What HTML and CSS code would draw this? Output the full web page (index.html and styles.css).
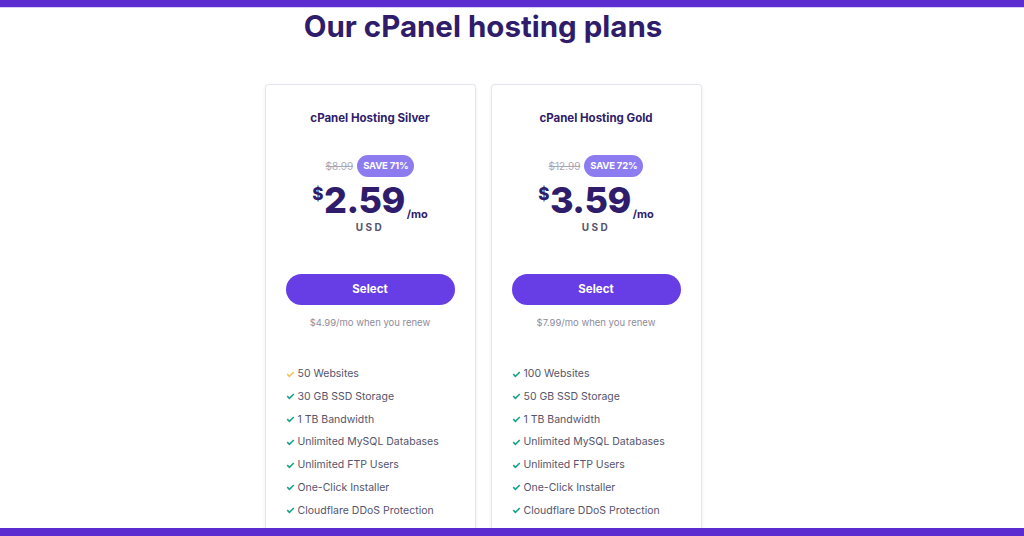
FILE: index.html
```html
<!DOCTYPE html>
<html>
    <head>
        <title>cPanel hosting plans</title>
        <link rel="stylesheet" href="styles.css">
    </head>
    <body>
        <div class="topBar"></div>

        <div class="page">
            <h1 class="mainTitle">Our cPanel hosting plans</h1>

            <div class="plans">
                <div class="card">
                    <div class="planName">cPanel Hosting Silver</div>
                    <div class="oldRow">
                        <span class="oldPrice">$8.99</span>
                        <span class="badge">SAVE 71%</span>
                    </div>
                    <div class="price"><span class="currency">$</span>2.59<span class="period">/mo</span></div>
                    <div class="usd">USD</div>
                    <div class="button">Select</div>
                    <div class="renew">$4.99/mo when you renew</div>
                    <ul class="features">
                        <li><svg class="check gold" viewBox="0 0 10 8"><path d="M0.6 4.2 L1.9 2.9 L3.8 4.8 L8.1 0.5 L9.4 1.8 L3.8 7.4 Z"/></svg>50 Websites</li>
                        <li><svg class="check" viewBox="0 0 10 8"><path d="M0.6 4.2 L1.9 2.9 L3.8 4.8 L8.1 0.5 L9.4 1.8 L3.8 7.4 Z"/></svg>30 GB SSD Storage</li>
                        <li><svg class="check" viewBox="0 0 10 8"><path d="M0.6 4.2 L1.9 2.9 L3.8 4.8 L8.1 0.5 L9.4 1.8 L3.8 7.4 Z"/></svg>1 TB Bandwidth</li>
                        <li><svg class="check" viewBox="0 0 10 8"><path d="M0.6 4.2 L1.9 2.9 L3.8 4.8 L8.1 0.5 L9.4 1.8 L3.8 7.4 Z"/></svg>Unlimited MySQL Databases</li>
                        <li><svg class="check" viewBox="0 0 10 8"><path d="M0.6 4.2 L1.9 2.9 L3.8 4.8 L8.1 0.5 L9.4 1.8 L3.8 7.4 Z"/></svg>Unlimited FTP Users</li>
                        <li><svg class="check" viewBox="0 0 10 8"><path d="M0.6 4.2 L1.9 2.9 L3.8 4.8 L8.1 0.5 L9.4 1.8 L3.8 7.4 Z"/></svg>One-Click Installer</li>
                        <li><svg class="check" viewBox="0 0 10 8"><path d="M0.6 4.2 L1.9 2.9 L3.8 4.8 L8.1 0.5 L9.4 1.8 L3.8 7.4 Z"/></svg>Cloudflare DDoS Protection</li>
                    </ul>
                </div>

                <div class="card">
                    <div class="planName">cPanel Hosting Gold</div>
                    <div class="oldRow">
                        <span class="oldPrice">$12.99</span>
                        <span class="badge">SAVE 72%</span>
                    </div>
                    <div class="price"><span class="currency">$</span>3.59<span class="period">/mo</span></div>
                    <div class="usd">USD</div>
                    <div class="button">Select</div>
                    <div class="renew">$7.99/mo when you renew</div>
                    <ul class="features">
                        <li><svg class="check" viewBox="0 0 10 8"><path d="M0.6 4.2 L1.9 2.9 L3.8 4.8 L8.1 0.5 L9.4 1.8 L3.8 7.4 Z"/></svg>100 Websites</li>
                        <li><svg class="check" viewBox="0 0 10 8"><path d="M0.6 4.2 L1.9 2.9 L3.8 4.8 L8.1 0.5 L9.4 1.8 L3.8 7.4 Z"/></svg>50 GB SSD Storage</li>
                        <li><svg class="check" viewBox="0 0 10 8"><path d="M0.6 4.2 L1.9 2.9 L3.8 4.8 L8.1 0.5 L9.4 1.8 L3.8 7.4 Z"/></svg>1 TB Bandwidth</li>
                        <li><svg class="check" viewBox="0 0 10 8"><path d="M0.6 4.2 L1.9 2.9 L3.8 4.8 L8.1 0.5 L9.4 1.8 L3.8 7.4 Z"/></svg>Unlimited MySQL Databases</li>
                        <li><svg class="check" viewBox="0 0 10 8"><path d="M0.6 4.2 L1.9 2.9 L3.8 4.8 L8.1 0.5 L9.4 1.8 L3.8 7.4 Z"/></svg>Unlimited FTP Users</li>
                        <li><svg class="check" viewBox="0 0 10 8"><path d="M0.6 4.2 L1.9 2.9 L3.8 4.8 L8.1 0.5 L9.4 1.8 L3.8 7.4 Z"/></svg>One-Click Installer</li>
                        <li><svg class="check" viewBox="0 0 10 8"><path d="M0.6 4.2 L1.9 2.9 L3.8 4.8 L8.1 0.5 L9.4 1.8 L3.8 7.4 Z"/></svg>Cloudflare DDoS Protection</li>
                    </ul>
                </div>
            </div>
        </div>

        <div class="bottomBar"></div>
    </body>
</html>
```

FILE: styles.css
```css
body {
    margin: 0px;
    font-family: "Inter", "DejaVu Sans", sans-serif;
    background-color: white;
    color: #2f1c6a;
    overflow: hidden;
    height: 536px;
}
.topBar {
    height: 7px;
    background-color: #5b2dd0;
    border-bottom: 1px solid #d9cdf7;
}
.bottomBar {
    position: fixed;
    left: 0;
    right: 0;
    bottom: 0;
    height: 8px;
    background-color: #5b2dd0;
}
.page {
    display: flex;
    flex-direction: column;
    align-items: center;
    padding-right: 58px;
}
.mainTitle {
    margin: 1px 0 0 0;
    font-size: 29.5px;
    font-weight: 700;
    color: #2f1c6a;
    line-height: 34px;
}
.plans {
    display: flex;
    gap: 15px;
    margin-top: 41px;
}
.card {
    width: 209px;
    border: 1px solid #e6e5ec;
    border-bottom: none;
    border-radius: 4px 4px 0 0;
    box-shadow: 0 1px 4px rgba(30, 20, 80, 0.06);
    padding-top: 25px;
    text-align: center;
    height: 426px;
}
.planName {
    font-size: 11.5px;
    font-weight: 700;
    color: #2f1c6a;
    line-height: 16px;
}
.oldRow {
    display: flex;
    justify-content: center;
    align-items: center;
    gap: 4px;
    margin-top: 29px;
}
.oldPrice {
    font-size: 10px;
    color: #a9a8b6;
    text-decoration: line-through;
}
.badge {
    background-color: #8c7cf0;
    color: white;
    font-size: 9.5px;
    font-weight: 700;
    letter-spacing: -0.2px;
    padding: 5px 6px;
    border-radius: 12px;
    line-height: 12px;
}
.price {
    margin-top: -1px;
    font-size: 36px;
    font-weight: 800;
    letter-spacing: -0.5px;
    line-height: 36px;
    color: #2f1c6a;
}
.currency {
    font-size: 17px;
    vertical-align: 13px;
    margin-right: 1px;
}
.period {
    font-size: 11px;
    font-weight: 700;
    letter-spacing: 0;
    margin-left: 2px;
    vertical-align: -5px;
}
.usd {
    font-size: 10px;
    font-weight: 700;
    letter-spacing: 2.5px;
    color: #55546b;
    margin-top: -12px;
    line-height: 14px;
}
.button {
    margin: 40px auto 0 auto;
    width: 169px;
    height: 31px;
    line-height: 31px;
    border-radius: 16px;
    background-color: #673de6;
    color: white;
    font-size: 11.5px;
    font-weight: 700;
}
.renew {
    margin-top: 12px;
    font-size: 9.5px;
    color: #8d8c9c;
    line-height: 12px;
}
.features {
    list-style: none;
    margin: 38px 0 0 0;
    padding: 0 0 0 20px;
    text-align: left;
}
.features li {
    font-size: 10.5px;
    color: #55546b;
    line-height: 14px;
    margin-bottom: 8.8px;
    display: flex;
    align-items: center;
}
.check {
    width: 9px;
    height: 7px;
    fill: #13a58a;
    margin-right: 3px;
}
.gold {
    fill: #f2c25a;
}
```
